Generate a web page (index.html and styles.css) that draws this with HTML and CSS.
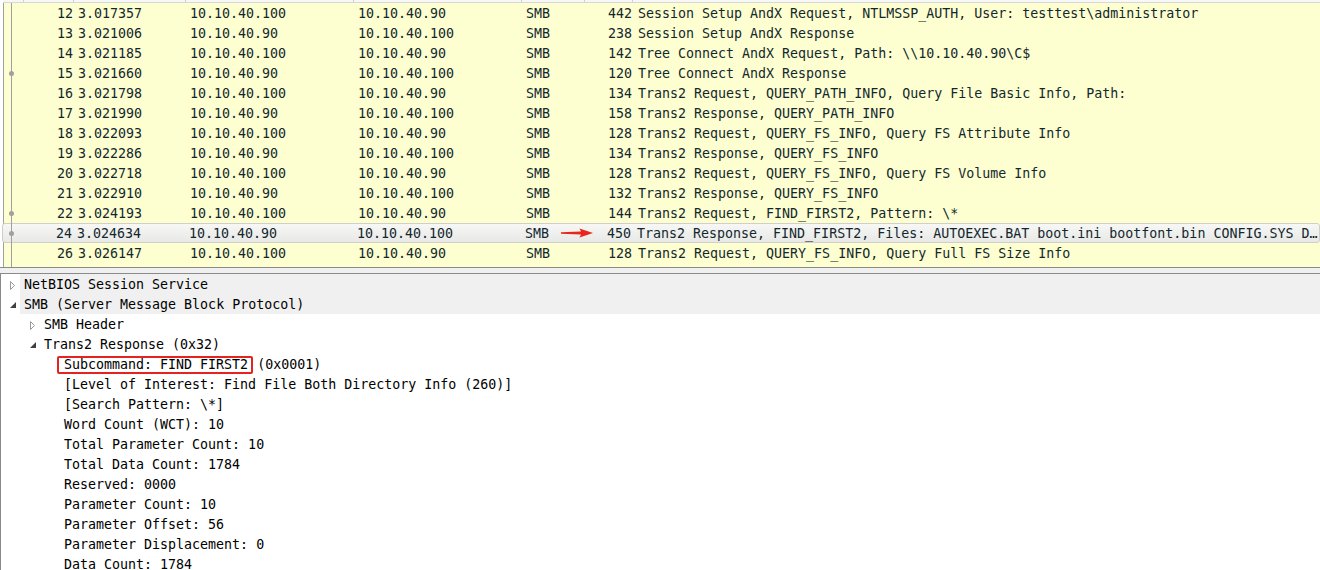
FILE: index.html
```html
<!DOCTYPE html>
<html>
<head>
<meta charset="utf-8">
<link rel="stylesheet" href="styles.css">
</head>
<body>
<div class="app">
  <div class="list">
    <div class="hdr">
      <span></span><span></span><span></span><span></span><span></span><span></span><span></span><span class="last"></span>
    </div>
    <div class="row"><span class="mk"></span><span class="no">12</span><span class="c">3.017357</span><span class="c">10.10.40.100</span><span class="c">10.10.40.90</span><span class="c">SMB</span><span class="len">442</span><span class="info">Session Setup AndX Request, NTLMSSP_AUTH, User: testtest\administrator</span></div>
    <div class="row"><span class="mk"></span><span class="no">13</span><span class="c">3.021006</span><span class="c">10.10.40.90</span><span class="c">10.10.40.100</span><span class="c">SMB</span><span class="len">238</span><span class="info">Session Setup AndX Response</span></div>
    <div class="row"><span class="mk"></span><span class="no">14</span><span class="c">3.021185</span><span class="c">10.10.40.100</span><span class="c">10.10.40.90</span><span class="c">SMB</span><span class="len">142</span><span class="info">Tree Connect AndX Request, Path: \\10.10.40.90\C$</span></div>
    <div class="row"><span class="mk dot"></span><span class="no">15</span><span class="c">3.021660</span><span class="c">10.10.40.90</span><span class="c">10.10.40.100</span><span class="c">SMB</span><span class="len">120</span><span class="info">Tree Connect AndX Response</span></div>
    <div class="row"><span class="mk"></span><span class="no">16</span><span class="c">3.021798</span><span class="c">10.10.40.100</span><span class="c">10.10.40.90</span><span class="c">SMB</span><span class="len">134</span><span class="info">Trans2 Request, QUERY_PATH_INFO, Query File Basic Info, Path:</span></div>
    <div class="row"><span class="mk"></span><span class="no">17</span><span class="c">3.021990</span><span class="c">10.10.40.90</span><span class="c">10.10.40.100</span><span class="c">SMB</span><span class="len">158</span><span class="info">Trans2 Response, QUERY_PATH_INFO</span></div>
    <div class="row"><span class="mk"></span><span class="no">18</span><span class="c">3.022093</span><span class="c">10.10.40.100</span><span class="c">10.10.40.90</span><span class="c">SMB</span><span class="len">128</span><span class="info">Trans2 Request, QUERY_FS_INFO, Query FS Attribute Info</span></div>
    <div class="row"><span class="mk"></span><span class="no">19</span><span class="c">3.022286</span><span class="c">10.10.40.90</span><span class="c">10.10.40.100</span><span class="c">SMB</span><span class="len">134</span><span class="info">Trans2 Response, QUERY_FS_INFO</span></div>
    <div class="row"><span class="mk"></span><span class="no">20</span><span class="c">3.022718</span><span class="c">10.10.40.100</span><span class="c">10.10.40.90</span><span class="c">SMB</span><span class="len">128</span><span class="info">Trans2 Request, QUERY_FS_INFO, Query FS Volume Info</span></div>
    <div class="row"><span class="mk"></span><span class="no">21</span><span class="c">3.022910</span><span class="c">10.10.40.90</span><span class="c">10.10.40.100</span><span class="c">SMB</span><span class="len">132</span><span class="info">Trans2 Response, QUERY_FS_INFO</span></div>
    <div class="row"><span class="mk dot"></span><span class="no">22</span><span class="c">3.024193</span><span class="c">10.10.40.100</span><span class="c">10.10.40.90</span><span class="c">SMB</span><span class="len">144</span><span class="info">Trans2 Request, FIND_FIRST2, Pattern: \*</span></div>
    <div class="row sel"><span class="mk dot"></span><span class="no">24</span><span class="c">3.024634</span><span class="c">10.10.40.90</span><span class="c">10.10.40.100</span><span class="c proto">SMB<svg class="arrow" width="32" height="10" viewBox="0 0 32 10"><polygon points="0,4.3 20,3.6 18.5,0.5 32,5 18.5,9.5 20,6.4 0,5.7" fill="#e8261c"/></svg></span><span class="len">450</span><span class="info">Trans2 Response, FIND_FIRST2, Files: AUTOEXEC.BAT boot.ini bootfont.bin CONFIG.SYS D…</span></div>
    <div class="row"><span class="mk"></span><span class="no">26</span><span class="c">3.026147</span><span class="c">10.10.40.100</span><span class="c">10.10.40.90</span><span class="c">SMB</span><span class="len">128</span><span class="info">Trans2 Request, QUERY_FS_INFO, Query Full FS Size Info</span></div>
    <div class="fill"></div>
  </div>
  <div class="split"></div>
  <div class="tree">
    <div class="node top l0"><span class="exp"><svg width="7" height="11" viewBox="0 0 7 11"><polygon points="1.5,1.5 5.5,5.5 1.5,9.5" fill="none" stroke="#9a9a9a" stroke-width="1"/></svg></span><span class="lbl">NetBIOS Session Service</span></div>
    <div class="node top l0"><span class="exp"><svg width="8" height="8" viewBox="0 0 8 8"><polygon points="7,1 7,7 1,7" fill="#404040"/></svg></span><span class="lbl">SMB (Server Message Block Protocol)</span></div>
    <div class="node l1"><span class="exp"><svg width="7" height="11" viewBox="0 0 7 11"><polygon points="1.5,1.5 5.5,5.5 1.5,9.5" fill="none" stroke="#9a9a9a" stroke-width="1"/></svg></span><span class="lbl">SMB Header</span></div>
    <div class="node l1"><span class="exp"><svg width="8" height="8" viewBox="0 0 8 8"><polygon points="7,1 7,7 1,7" fill="#404040"/></svg></span><span class="lbl">Trans2 Response (0x32)</span></div>
    <div class="node l2"><span class="lbl"><span class="box">Subcommand: FIND FIRST2</span>(0x0001)</span></div>
    <div class="node l2"><span class="lbl">[Level of Interest: Find File Both Directory Info (260)]</span></div>
    <div class="node l2"><span class="lbl">[Search Pattern: \*]</span></div>
    <div class="node l2"><span class="lbl">Word Count (WCT): 10</span></div>
    <div class="node l2"><span class="lbl">Total Parameter Count: 10</span></div>
    <div class="node l2"><span class="lbl">Total Data Count: 1784</span></div>
    <div class="node l2"><span class="lbl">Reserved: 0000</span></div>
    <div class="node l2"><span class="lbl">Parameter Count: 10</span></div>
    <div class="node l2"><span class="lbl">Parameter Offset: 56</span></div>
    <div class="node l2"><span class="lbl">Parameter Displacement: 0</span></div>
    <div class="node l2"><span class="lbl">Data Count: 1784</span></div>
  </div>
</div>
</body>
</html>
```
FILE: styles.css
```css
html, body {
  margin: 0;
  padding: 0;
  background: #ffffff;
  overflow: hidden;
}
.app {
  width: 1320px;
  height: 570px;
  display: flex;
  flex-direction: column;
  font-family: "DejaVu Sans Mono", "Liberation Mono", monospace;
  font-size: 13.3px;
  overflow: hidden;
}
.list {
  height: 267px;
  flex-shrink: 0;
  display: flex;
  flex-direction: column;
  background: #feffd0;
  border-left: 1px solid #a0a0a0;
  margin-left: 3px;
  color: #12272e;
  position: relative;
}
.hdr {
  height: 3px;
  flex-shrink: 0;
  display: grid;
  grid-template-columns: 21px 50px 112px 168px 168px 63px 48px 1fr;
  background: #f7f7f7;
  border-bottom: 1px solid #d8d8d8;
  box-sizing: border-box;
  margin-left: -1px;
}
.hdr span {
  border-right: 1px solid #d0d0d0;
}
.hdr span.last {
  border-right: none;
}
.row {
  height: 20px;
  flex-shrink: 0;
  line-height: 20px;
  padding-top: 1px;
  display: grid;
  grid-template-columns: 21px 50px 112px 168px 168px 63px 48px 1fr;
  white-space: nowrap;
  position: relative;
  box-sizing: border-box;
}
.row span {
  overflow: hidden;
  line-height: 19px;
}
.row .c {
  padding-left: 3px;
}
.row .no, .row .len {
  text-align: right;
  padding-right: 2px;
}
.row .info {
  padding-left: 4px;
}
.mk {
  position: relative;
  margin-top: -1px;
  height: 20px;
  background: linear-gradient(#a0a0a0, #a0a0a0) no-repeat 7px 0 / 1px 100%;
}
.mk.dot::after {
  content: "";
  position: absolute;
  left: 5px;
  top: 8px;
  width: 5px;
  height: 5px;
  border-radius: 50%;
  background: #a0a0a0;
}
.row.sel {
  background: linear-gradient(#f7f7f5, #e8e8e6);
  border: 1px solid #cfcfcd;
  border-radius: 3px;
  margin-left: -2px;
  padding-left: 1px;
  padding-top: 1px;
  grid-template-columns: 20px 50px 112px 168px 168px 63px 48px 1fr;
}
.row.sel span {
  line-height: 17px;
}
.row.sel .mk {
  margin-top: -2px;
}
.row.sel .mk.dot::after {
  top: 8px;
}
.proto {
  position: relative;
  overflow: visible !important;
}
.arrow {
  position: absolute;
  left: 39px;
  top: 3px;
}
.fill {
  flex: 1;
  background: linear-gradient(#a0a0a0, #a0a0a0) no-repeat 7px 0 / 1px 100%;
}
.split {
  height: 7px;
  flex-shrink: 0;
  background: #f0f0f0;
  border-top: 1px solid #8a8a8a;
  border-bottom: 1px solid #8a8a8a;
  box-sizing: border-box;
}
.tree {
  flex: 1;
  min-height: 0;
  overflow: hidden;
  background: #ffffff;
  border-left: 1px solid #8a8a8a;
  color: #000000;
}
.node {
  height: 20px;
  line-height: 18px;
  padding-top: 2px;
  box-sizing: border-box;
  display: flex;
  align-items: center;
  white-space: nowrap;
}
.node.top {
  background: linear-gradient(#f0f0f0, #f0f0f0) no-repeat 19px 0 / 100% 100%;
}
.node.l0 { padding-left: 3px; }
.node.l1 { padding-left: 23px; }
.node.l2 { padding-left: 63px; }
.exp {
  width: 20px;
  height: 18px;
  display: flex;
  align-items: center;
  padding-left: 5px;
  box-sizing: border-box;
}
.lbl {
  display: flex;
  align-items: center;
}
.box {
  display: inline-block;
  height: 18px;
  line-height: 14px;
  box-sizing: border-box;
  border: 2px solid #e52420;
  border-radius: 2px;
  padding: 0 3px 0 5px;
  margin-left: -7px;
  margin-right: 4px;
}
```
